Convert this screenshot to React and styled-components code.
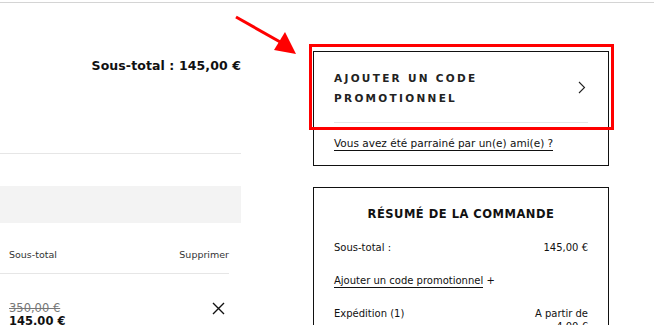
import React from 'react';
import styled, { createGlobalStyle } from 'styled-components';

const GlobalStyle = createGlobalStyle`
  * { margin: 0; padding: 0; box-sizing: border-box; }
  body {
    background: #fff;
    font-family: "DejaVu Sans", "Noto Sans", sans-serif;
    color: #111;
    overflow: hidden;
  }
`;

const Page = styled.div`
  width: 654px;
  height: 325px;
  position: relative;
  overflow: hidden;
  border-top: 2px solid #fff;
`;

const TopRule = styled.div`
  height: 1px;
  background: #d4d4d4;
`;

const Layout = styled.div`
  display: grid;
  grid-template-columns: 241px 296px;
  column-gap: 72px;
`;

const Left = styled.div`
  display: flex;
  flex-direction: column;
`;

const CartTotal = styled.div`
  height: 151px;
  border-bottom: 1px solid #e6e6e6;
  display: flex;
  justify-content: flex-end;
  padding-top: 55px;
  font-size: 12.5px;
  font-weight: 700;
  letter-spacing: 0.1px;
`;

const Band = styled.div`
  margin-top: 32px;
  height: 37px;
  background: #f3f3f3;
`;

const TableHead = styled.div`
  margin-right: 12px;
  height: 51px;
  border-bottom: 1px solid #e6e6e6;
  display: flex;
  justify-content: space-between;
  align-items: center;
  padding: 12px 0 0 9px;
  font-size: 9.5px;
  color: #333;
`;

const ItemRow = styled.div`
  margin-right: 12px;
  display: flex;
  justify-content: space-between;
  padding: 28px 4px 0 9px;
`;

const Prices = styled.div`
  display: flex;
  flex-direction: column;
  font-size: 11.5px;
  line-height: 13px;
`;

const OldPrice = styled.span`
  color: #777;
  text-decoration: line-through;
`;

const NewPrice = styled.span`
  font-weight: 700;
  color: #111;
`;

const Right = styled.div`
  padding-top: 48px;
  display: flex;
  flex-direction: column;
  gap: 21px;
`;

const Box = styled.div`
  position: relative;
  border: 1px solid #111;
  padding: 0 20px;
`;

const PromoButton = styled.div`
  height: 71px;
  display: flex;
  align-items: center;
  justify-content: space-between;
  border-bottom: 1px solid #e6e6e6;
  padding-right: 2px;
`;

const PromoLabel = styled.div`
  font-size: 10.5px;
  font-weight: 700;
  letter-spacing: 2.3px;
  line-height: 20px;
  color: #222;
  padding-top: 1px;
`;

const Highlight = styled.div`
  position: absolute;
  left: -5px;
  top: -8px;
  right: -6px;
  height: 86px;
  border: 3px solid #f00;
  pointer-events: none;
`;

const ReferLink = styled.a`
  display: inline-block;
  margin: 13px 0 14px;
  font-size: 10.5px;
  color: #111;
  text-decoration: none;
  border-bottom: 1px solid #111;
  line-height: 14px;
  align-self: flex-start;
`;

const Summary = styled(Box)`
  height: 160px;
  padding-top: 19px;
`;

const SummaryTitle = styled.h2`
  text-align: center;
  font-size: 11.5px;
  font-weight: 700;
  letter-spacing: 0.5px;
  color: #111;
  margin-bottom: 20px;
`;

const SummaryRow = styled.div`
  display: flex;
  justify-content: space-between;
  font-size: 10px;
  line-height: 13px;
  height: 33px;
  color: #111;
`;

const RightValue = styled.span`
  text-align: right;
`;

const Underlined = styled.span`
  border-bottom: 1px solid #111;
  padding-bottom: 1px;
`;

const Arrow = styled.svg`
  position: absolute;
  left: 230px;
  top: 8px;
`;

export default function App() {
  return (
    <>
      <GlobalStyle />
      <Page>
        <TopRule />
        <Layout>
          <Left>
            <CartTotal>Sous-total : 145,00 €</CartTotal>
            <Band />
            <TableHead>
              <span>Sous-total</span>
              <span>Supprimer</span>
            </TableHead>
            <ItemRow>
              <Prices>
                <OldPrice>350,00 €</OldPrice>
                <NewPrice>145,00 €</NewPrice>
              </Prices>
              <svg width="13" height="13" viewBox="0 0 13 13">
                <path d="M1 1 L12 12 M12 1 L1 12" stroke="#111" strokeWidth="1.4" />
              </svg>
            </ItemRow>
          </Left>
          <Right>
            <Box>
              <PromoButton>
                <PromoLabel>
                  AJOUTER UN CODE
                  <br />
                  PROMOTIONNEL
                </PromoLabel>
                <svg width="8" height="13" viewBox="0 0 8 13">
                  <path d="M1 1 L6.5 6.5 L1 12" stroke="#222" strokeWidth="1.1" fill="none" />
                </svg>
              </PromoButton>
              <ReferLink>Vous avez été parrainé par un(e) ami(e) ?</ReferLink>
              <Highlight />
            </Box>
            <Summary>
              <SummaryTitle>RÉSUMÉ DE LA COMMANDE</SummaryTitle>
              <SummaryRow>
                <span>Sous-total :</span>
                <RightValue>145,00 €</RightValue>
              </SummaryRow>
              <SummaryRow>
                <span>
                  <Underlined>Ajouter un code promotionnel</Underlined> +
                </span>
              </SummaryRow>
              <SummaryRow>
                <span>Expédition (1)</span>
                <RightValue>
                  A partir de
                  <br />
                  4,00 €
                </RightValue>
              </SummaryRow>
            </Summary>
          </Right>
        </Layout>
        <Arrow width="72" height="52" viewBox="0 0 72 52">
          <line x1="6" y1="7" x2="52" y2="33" stroke="#f00" strokeWidth="3" />
          <polygon points="66,44 44,40 55,22" fill="#f00" />
        </Arrow>
      </Page>
    </>
  );
}
